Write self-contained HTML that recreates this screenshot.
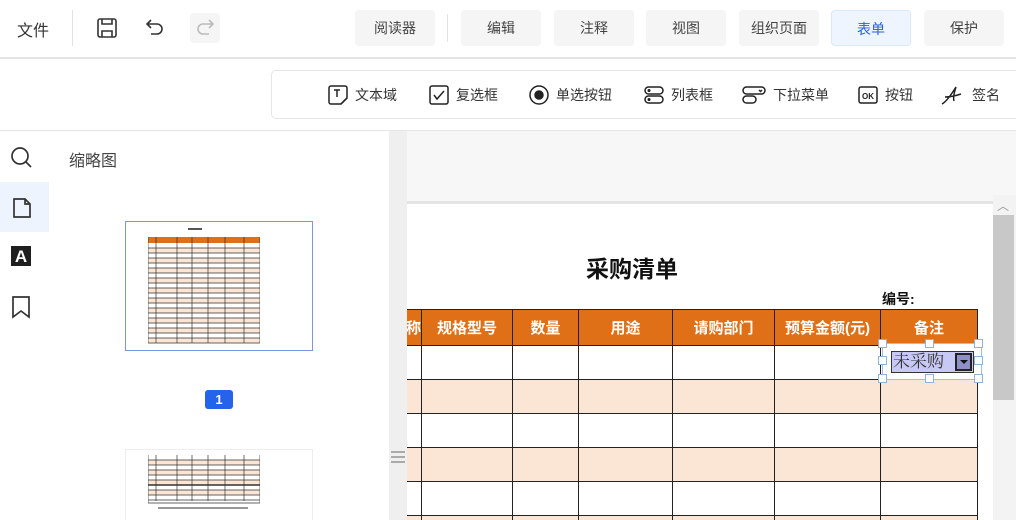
<!DOCTYPE html>
<html><head><meta charset="utf-8"><style>
*{margin:0;padding:0;box-sizing:border-box}
html,body{width:1016px;height:520px;overflow:hidden}
body{background:#fff;font-family:"Liberation Sans","Noto Sans CJK SC",sans-serif;color:#333;position:relative}
.a{position:absolute}
.btn{position:absolute;top:10px;height:36px;background:#f5f5f5;border-radius:4px;font-size:14px;line-height:36px;text-align:center;color:#444}
.tool{position:absolute;top:84px;height:22px;font-size:14px;line-height:22px;color:#333;display:flex;align-items:center;gap:6px}
svg{display:block}
table{border-collapse:collapse}
td{border:1px solid #222}
.h{position:absolute;width:9px;height:9px;border:1px solid #8ab4e0;background:#fff}
</style></head><body>
<div class="a" style="left:17px;top:17px;font-size:16px">文件</div>
<div class="a" style="left:72px;top:10px;width:1px;height:36px;background:#e2e2e2"></div>
<svg class="a" style="left:96px;top:17px" width="22" height="22" viewBox="0 0 22 22" fill="none" stroke="#333" stroke-width="1.6"><rect x="2" y="2" width="18" height="18" rx="2"/><path d="M6 2v5h10V2M6 20v-6h10v6"/></svg>
<svg class="a" style="left:144px;top:17px" width="22" height="22" viewBox="0 0 22 22" fill="none" stroke="#333" stroke-width="1.6"><path d="M7 3L3 7l4 4M3 7h10a5 5 0 0 1 0 10H7"/></svg>
<div class="a" style="left:190px;top:13px;width:30px;height:30px;background:#f5f5f5;border-radius:4px"></div>
<svg class="a" style="left:194px;top:17px" width="22" height="22" viewBox="0 0 22 22" fill="none" stroke="#bbb" stroke-width="1.6"><path d="M15 3l4 4-4 4M19 7H9a5 5 0 0 0 0 10h6"/></svg>
<div class="btn" style="left:355px;width:80px">阅读器</div>
<div class="a" style="left:447px;top:14px;width:1px;height:28px;background:#e2e2e2"></div>
<div class="btn" style="left:461px;width:80px">编辑</div>
<div class="btn" style="left:554px;width:80px">注释</div>
<div class="btn" style="left:646px;width:80px">视图</div>
<div class="btn" style="left:739px;width:80px">组织页面</div>
<div class="btn" style="left:831px;width:80px;background:#eef5ff;border:1px solid #dbe7fb;color:#2b5fe0">表单</div>
<div class="btn" style="left:924px;width:80px">保护</div>
<div class="a" style="left:0;top:57px;width:1016px;height:2px;background:#e4e4e4"></div>
<div class="a" style="left:271px;top:70px;width:745px;height:49px;border:1px solid #e6e6e6;border-right:none;border-radius:5px 0 0 5px"></div>
<div class="tool" style="left:327px"><svg width="22" height="22" viewBox="0 0 22 22" fill="none" stroke="#222" stroke-width="1.5"><path d="M4 2h14a2 2 0 0 1 2 2v10l-6 6H4a2 2 0 0 1-2-2V4a2 2 0 0 1 2-2z"/><path d="M7 6h6M10 6v7M20 14l-6 6" /></svg>文本域</div>
<div class="tool" style="left:428px"><svg width="22" height="22" viewBox="0 0 22 22" fill="none" stroke="#222" stroke-width="1.5"><rect x="2" y="2" width="18" height="18" rx="2"/><path d="M6 11l3 4 7-8"/></svg>复选框</div>
<div class="tool" style="left:528px"><svg width="22" height="22" viewBox="0 0 22 22" fill="none" stroke="#222" stroke-width="1.5"><circle cx="11" cy="11" r="9"/><circle cx="11" cy="11" r="4" fill="#222"/></svg>单选按钮</div>
<div class="tool" style="left:643px"><svg width="22" height="22" viewBox="0 0 22 22" fill="none" stroke="#222" stroke-width="1.5"><rect x="2" y="3" width="18" height="7" rx="3.5"/><rect x="2" y="12" width="18" height="7" rx="3.5"/><circle cx="6" cy="6.5" r=".8" fill="#222"/><circle cx="6" cy="15.5" r=".8" fill="#222"/></svg>列表框</div>
<div class="tool" style="left:741px"><svg width="26" height="22" viewBox="0 0 26 22" fill="none" stroke="#222" stroke-width="1.5"><rect x="2" y="3" width="22" height="7" rx="3.5"/><rect x="2" y="12" width="13" height="7" rx="3.5"/><path d="M18 6l1.5 1.5L21 6"/></svg>下拉菜单</div>
<div class="tool" style="left:857px"><svg width="22" height="22" viewBox="0 0 22 22" fill="none" stroke="#222" stroke-width="1.5"><rect x="2" y="3" width="18" height="16" rx="2"/><text x="11" y="15" font-size="8" font-weight="bold" text-anchor="middle" fill="#222" stroke="none" font-family="Liberation Sans">OK</text></svg>按钮</div>
<div class="tool" style="left:940px"><svg width="26" height="22" viewBox="0 0 26 22" fill="none" stroke="#222" stroke-width="1.5"><path d="M2 20c4-2 9-9 14-17c-2 6-3 11-2 14M5 13c5 0 10-1 16-3"/></svg>签名</div>
<div class="a" style="left:0;top:130px;width:1016px;height:1px;background:#e6e6e6"></div>
<svg class="a" style="left:10px;top:146px" width="24" height="24" viewBox="0 0 24 24" fill="none" stroke="#333" stroke-width="1.7"><circle cx="10" cy="10" r="8"/><path d="M16 16l5 5"/></svg>
<div class="a" style="left:0;top:182px;width:49px;height:50px;background:#eef4fd"></div>
<svg class="a" style="left:11px;top:196px" width="22" height="24" viewBox="0 0 22 24" fill="none" stroke="#333" stroke-width="1.7"><path d="M3 3h11l5 5v13H3z M14 3v5h5"/></svg>
<div class="a" style="left:11px;top:246px;width:20px;height:20px;background:#1f1f1f;color:#fff;font-size:17px;line-height:21px;text-align:center;font-weight:bold">A</div>
<svg class="a" style="left:11px;top:295px" width="20" height="24" viewBox="0 0 20 24" fill="none" stroke="#333" stroke-width="1.7"><path d="M2 2h16v20l-8-6-8 6z"/></svg>
<div class="a" style="left:69px;top:147px;font-size:16px;color:#444">缩略图</div>
<div class="a" style="left:125px;top:221px;width:188px;height:130px;border:1px solid #7b95e0"></div>
<svg class="a" style="left:148px;top:228px" width="112" height="116" viewBox="0 0 112 116">
<rect x="40" y="0" width="14" height="2" fill="#555"/>
<rect x="0" y="9" width="112" height="6" fill="#e07018"/>
<g fill="#fbe6d6"><rect y="20" width="112" height="5"/><rect y="30" width="112" height="5"/><rect y="40" width="112" height="5"/><rect y="50" width="112" height="5"/><rect y="60" width="112" height="5"/><rect y="70" width="112" height="5"/><rect y="80" width="112" height="5"/><rect y="90" width="112" height="5"/><rect y="100" width="112" height="5"/><rect y="110" width="112" height="5"/></g>
<g stroke="#333" stroke-width=".7" fill="none"><path d="M0 9v106M8 9v106M29 9v106M44 9v106M60 9v106M77 9v106M96 9v106M112 9v106M0 20h112M0 25h112M0 30h112M0 35h112M0 40h112M0 45h112M0 50h112M0 55h112M0 60h112M0 65h112M0 70h112M0 75h112M0 80h112M0 85h112M0 90h112M0 95h112M0 100h112M0 105h112M0 110h112M0 115h112"/></g>
</svg>
<div class="a" style="left:205px;top:390px;width:28px;height:19px;background:#2563eb;border-radius:3px;color:#fff;font-size:13px;font-weight:bold;text-align:center;line-height:19px">1</div>
<div class="a" style="left:125px;top:449px;width:188px;height:71px;border:1px solid #eee;border-bottom:none"></div>
<svg class="a" style="left:148px;top:455px" width="112" height="60" viewBox="0 0 112 60">
<g fill="#fbe6d6"><rect y="5" width="112" height="5"/><rect y="15" width="112" height="5"/><rect y="25" width="112" height="5"/><rect y="35" width="112" height="5"/></g>
<g stroke="#333" stroke-width=".7" fill="none"><path d="M0 0v48M8 0v46M29 0v46M44 0v46M60 0v46M77 0v46M96 0v46M112 0v48M0 5h112M0 10h112M0 15h112M0 20h112M0 25h112M0 35h112M0 40h112M0 45h112M0 48h112"/><path d="M0 30h112" stroke-width="1.4"/></g>
<rect x="10" y="52" width="90" height="2" fill="#999"/>
</svg>
<div class="a" style="left:389px;top:131px;width:18px;height:389px;background:#efefef"></div>
<div class="a" style="left:391px;top:451px;width:14px;height:12px;border-top:2px solid #aaa;border-bottom:2px solid #aaa"></div>
<div class="a" style="left:391px;top:456px;width:14px;height:2px;background:#aaa"></div>
<div class="a" style="left:407px;top:131px;width:609px;height:72px;background:#f7f7f7"></div>
<div class="a" style="left:407px;top:201px;width:586px;height:3px;background:#e4e4e4"></div>
<div class="a" style="left:993px;top:195px;width:23px;height:325px;background:#f3f3f3"></div>
<div class="a" style="left:997px;top:197px;font-size:12px;color:#999">︿</div>
<div class="a" style="left:993px;top:215px;width:21px;height:185px;background:#c8c8c8"></div>
<div class="a" style="left:586px;top:250px;font-size:23px;font-weight:bold;color:#111">采购清单</div>
<div class="a" style="left:882px;top:289px;font-size:14px;font-weight:bold;color:#111">编号:</div>
<div class="a" style="left:407px;top:300px;width:586px;height:220px;overflow:hidden">
<table class="a" style="left:-7px;top:9px">
<tr style="height:36px;background:#e07018;color:#fff;font-weight:bold;font-size:15px;text-align:center">
<td style="width:21px;overflow:hidden;text-align:right">称</td><td style="width:91px">规格型号</td><td style="width:66px">数量</td><td style="width:94px">用途</td><td style="width:102px">请购部门</td><td style="width:106px">预算金额(元)</td><td style="width:97px">备注</td></tr>
<tr style="height:34px"><td></td><td></td><td></td><td></td><td></td><td></td><td></td></tr>
<tr style="height:34px;background:#fbe6d6"><td></td><td></td><td></td><td></td><td></td><td></td><td></td></tr>
<tr style="height:34px"><td></td><td></td><td></td><td></td><td></td><td></td><td></td></tr>
<tr style="height:34px;background:#fbe6d6"><td></td><td></td><td></td><td></td><td></td><td></td><td></td></tr>
<tr style="height:34px"><td></td><td></td><td></td><td></td><td></td><td></td><td></td></tr>
<tr style="height:34px;background:#fbe6d6"><td></td><td></td><td></td><td></td><td></td><td></td><td></td></tr>
</table>
</div>
<div class="a" style="left:882px;top:343px;width:100px;height:37px;border:1px solid #9cc0e8;background:#fff"></div>
<div class="a" style="left:891px;top:351px;width:83px;height:22px;background:#c8c8f4;border:1px solid #333;font-family:'Liberation Serif','Noto Serif CJK SC',serif;font-size:17px;line-height:20px;color:#333;padding-left:1px">未采购</div>
<div class="a" style="left:955px;top:353px;width:17px;height:18px;background:#8e8ec8;border:2px solid #222"></div>
<div class="a" style="left:960px;top:360px;width:0;height:0;border-left:4px solid transparent;border-right:4px solid transparent;border-top:4px solid #111"></div>
<div class="h" style="left:878px;top:339px"></div><div class="h" style="left:925px;top:339px"></div><div class="h" style="left:974px;top:339px"></div>
<div class="h" style="left:878px;top:356px"></div><div class="h" style="left:974px;top:356px"></div>
<div class="h" style="left:878px;top:374px"></div><div class="h" style="left:925px;top:374px"></div><div class="h" style="left:974px;top:374px"></div>
</body></html>
